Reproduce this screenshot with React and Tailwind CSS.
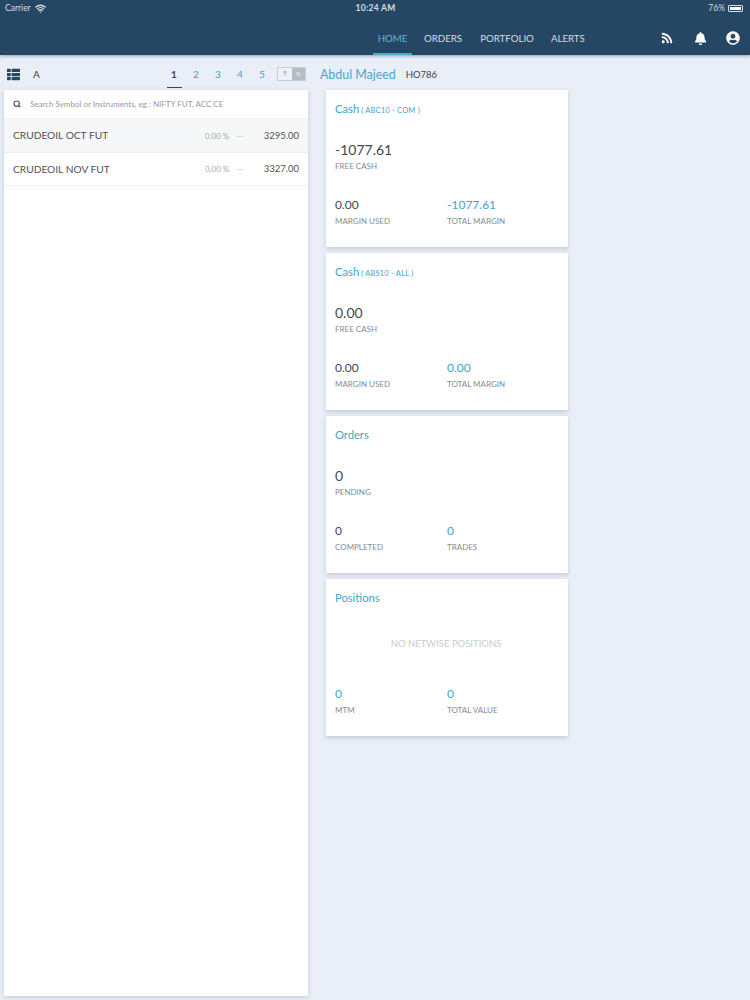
import React from "react";
import { Wifi, Search } from "lucide-react";
import { FaRss, FaBell, FaUserCircle, FaThList } from "react-icons/fa";

const lato = { fontFamily: "Lato, 'Open Sans', sans-serif" };

function Metric({ value, label, accent, big, className = "" }) {
  return (
    <div className={className}>
      <div className={`${big ? "text-[14px]" : "text-[12px]"} leading-[16px] ${accent ? "text-[#3fa6c9]" : "text-[#45494d]"}`}>{value}</div>
      <div className="mt-[2px] text-[8px] leading-[12px] text-[#868b90]">{label}</div>
    </div>
  );
}

function Card({ title, sub, top, bl, br, blAccent }) {
  return (
    <section className="flex h-[157px] w-[242px] flex-col bg-white px-[9px] pt-[12px] shadow-[0_2px_4px_rgba(130,140,160,0.35)]">
      <div className="h-[14px] text-[11.2px] leading-[14px] text-[#3fa6c9]">
        {title}
        {sub && <span className="ml-[2px] text-[7.5px] tracking-[0.2px]">{sub}</span>}
      </div>
      <div className="mt-[26px] h-[28px]">{top}</div>
      <div className="mt-[27px] flex">
        <Metric value={bl.value} label={bl.label} accent={blAccent} className="w-[112px]" />
        <Metric value={br.value} label={br.label} accent />
      </div>
    </section>
  );
}

function Row({ name, pct, dash, price, active }) {
  return (
    <div className={`flex h-[33.5px] items-center border-b border-[#eef0f3] px-[9px] pt-[1px] ${active ? "bg-[#f6f7f8]" : "bg-white"}`}>
      <span className="flex-1 text-[10.2px] text-[#4f5357]">{name}</span>
      <span className="w-[24px] whitespace-nowrap text-[8px] text-[#a3a7ab]">{pct}</span>
      <span className="ml-[8px] w-[8px] text-[8px] text-[#a3a7ab]">{dash}</span>
      <span className="w-[54px] text-right text-[9.5px] text-[#4f5357]">{price}</span>
    </div>
  );
}

export default function App() {
  return (
    <div style={lato} className="flex h-[1000px] w-[750px] flex-col overflow-hidden bg-[#e9eef7]">
      <header className="h-[55px] shrink-0 bg-[#264763] shadow-[0_1px_3px_rgba(60,80,100,0.5)]">
        <div className="grid h-[15px] grid-cols-3 items-center pl-[5px] pr-[5px] pt-[1px] text-[8.5px] text-[#d5dde4]">
          <div className="flex items-center gap-[4px]">Carrier <Wifi size={11} strokeWidth={3} /></div>
          <div className="pl-[1px] text-center font-bold tracking-[0.3px]">10:24 AM</div>
          <div className="flex items-center justify-end gap-[3px] pr-[2px]">
            76%
            <span className="flex h-[7px] w-[15px] items-stretch rounded-[1px] border border-[#d5dde4] p-[1px]"><span className="w-[11px] bg-white" /></span>
          </div>
        </div>
        <nav className="flex h-[40px] items-stretch pl-[373px] pr-[9px] text-[9.7px] text-[#d4dde5]">
          <a className="flex w-[39px] items-center justify-center border-b-[2px] border-[#4aa9cd] pt-[9px] text-[#5fb5d6]">HOME</a>
          <a className="ml-[12px] flex items-center pt-[7px]">ORDERS</a>
          <a className="ml-[18px] flex items-center pt-[7px]">PORTFOLIO</a>
          <a className="ml-[17px] flex items-center pt-[7px]">ALERTS</a>
          <div className="ml-auto flex items-center pr-[1px] pt-[6px] text-white">
            <FaRss size={12} />
            <FaBell size={13} className="ml-[21px]" />
            <FaUserCircle size={14} className="ml-[19px]" />
          </div>
        </nav>
      </header>

      <main className="flex flex-1 items-start">
        <div className="ml-[4px] w-[304px]">
          <div className="flex h-[35px] items-center pt-[3px] text-[#3f4448]">
            <FaThList size={13} className="ml-[3px] text-[#264763]" />
            <span className="ml-[13px] text-[10px]">A</span>
            <div className="ml-[123px] flex text-[10px] text-[#3fa6c9]">
              <span className="relative w-[22px] text-center font-bold text-[#3f4448]">
                1
                <span className="absolute left-[4px] top-[20px] h-[1.5px] w-[15px] bg-[#3f4448]" />
              </span>
              <span className="w-[22px] text-center">2</span>
              <span className="w-[22px] text-center">3</span>
              <span className="w-[22px] text-center">4</span>
              <span className="w-[22px] text-center">5</span>
            </div>
            <div className="ml-[4px] -mt-[1px] flex h-[14px] w-[29px] border border-[#c9ced4] text-[6.5px] leading-[12px]">
              <span className="w-[14px] bg-[#eef1f5] text-center text-[#9aa0a6]">₹</span>
              <span className="flex-1 bg-[#b6bcc3] text-center text-[#eef1f5]">%</span>
            </div>
          </div>
          <div className="h-[906px] bg-white shadow-[0_1px_4px_rgba(120,130,150,0.35)]">
            <div className="flex h-[29px] items-center border-b border-[#eef0f3] pl-[9px] text-[8px] text-[#969a9e]">
              <Search size={8} strokeWidth={3.5} className="text-[#555a5f]" />
              <span className="ml-[9px]">Search Symbol or Instruments, eg : NIFTY FUT, ACC CE</span>
            </div>
            <Row name="CRUDEOIL OCT FUT" pct="0.00 %" dash="--" price="3295.00" active />
            <Row name="CRUDEOIL NOV FUT" pct="0.00 %" dash="--" price="3327.00" />
          </div>
        </div>

        <div className="ml-[12px]">
          <div className="flex h-[35px] items-center pt-[5px]">
            <span className="text-[12.4px] text-[#4aa9cd]">Abdul Majeed</span>
            <span className="ml-[10px] text-[9.5px] text-[#3f4448]">HO786</span>
          </div>
          <div className="ml-[6px] flex flex-col gap-[6px]">
            <Card title="Cash" sub="( ABC10 - COM )" top={<Metric value="-1077.61" label="FREE CASH" big />} bl={{ value: "0.00", label: "MARGIN USED" }} br={{ value: "-1077.61", label: "TOTAL MARGIN" }} />
            <Card title="Cash" sub="( ABS10 - ALL )" top={<Metric value="0.00" label="FREE CASH" big />} bl={{ value: "0.00", label: "MARGIN USED" }} br={{ value: "0.00", label: "TOTAL MARGIN" }} />
            <Card title="Orders" top={<Metric value="0" label="PENDING" big />} bl={{ value: "0", label: "COMPLETED" }} br={{ value: "0", label: "TRADES" }} />
            <Card title="Positions" top={<div className="pr-[2px] pt-[6px] text-center text-[9.5px] text-[#c8cbcf]">NO NETWISE POSITIONS</div>} bl={{ value: "0", label: "MTM" }} br={{ value: "0", label: "TOTAL VALUE" }} blAccent />
          </div>
        </div>
      </main>
    </div>
  );
}
